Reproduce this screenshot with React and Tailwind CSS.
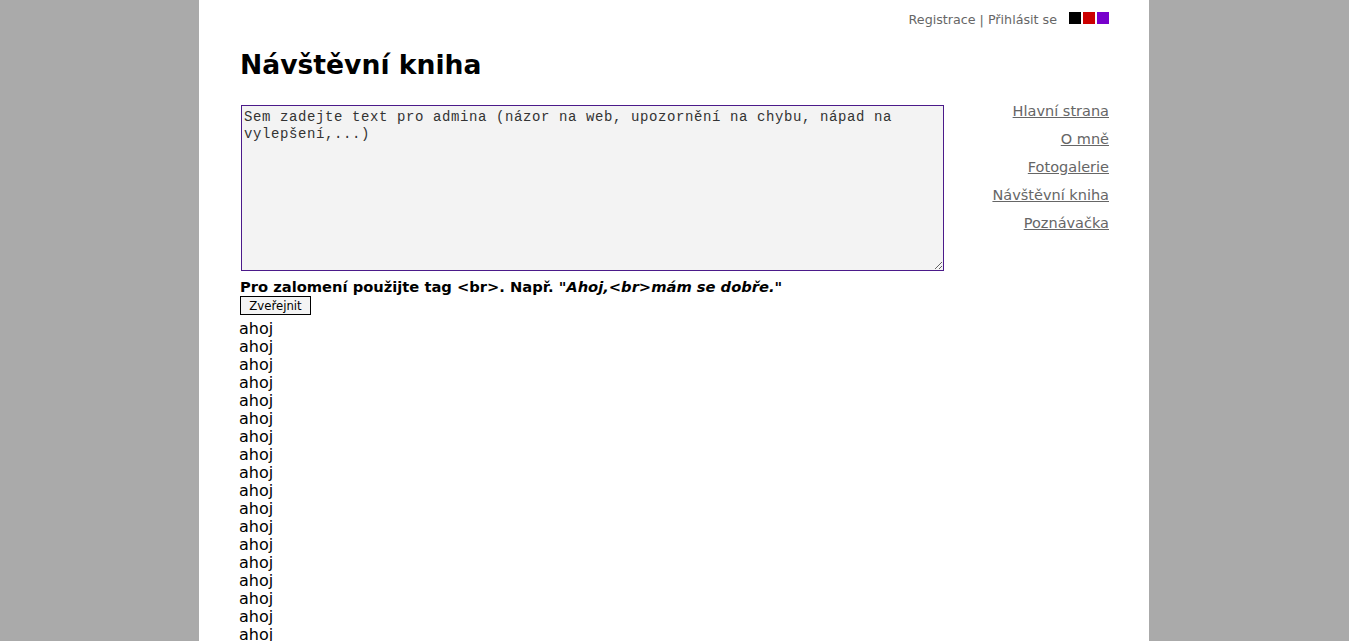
import React from "react";

const navLinks = ["Hlavní strana", "O mně", "Fotogalerie", "Návštěvní kniha", "Poznávačka"];

export default function App() {
  const lines = Array.from({ length: 20 });
  return (
    <div className="min-h-screen bg-[#aaaaaa] flex justify-center" style={{ fontFamily: "'DejaVu Sans', Verdana, sans-serif" }}>
      <div className="w-[950px] bg-white min-h-screen px-[40px] ml-[-1px]">
        <div className="flex justify-end items-center pt-[11px] h-[24px]">
          <span className="text-[12.7px] text-[#666666] leading-[16px] mr-[12px] mt-[4px]">
            <a className="text-[#666666]">Registrace</a> | <a className="text-[#666666]">Přihlásit se</a>
          </span>
          <span className="w-[12px] h-[12px] bg-black" />
          <span className="w-[12px] h-[12px] bg-[#cc0000] ml-[2px]" />
          <span className="w-[12px] h-[12px] bg-[#7700cc] ml-[2px]" />
        </div>
        <h1 className="text-[26.6px] font-bold leading-[34px] mt-[24px] ml-[1px] text-black">Návštěvní kniha</h1>
        <div className="flex mt-[23px]">
          <div className="flex-1">
            <textarea
              className="block w-[703px] h-[166px] ml-[2px] border border-[#4b1a8a] bg-[#f3f3f3] text-[14px] leading-[17px] tracking-[0.6px] px-[2px] pt-[3px] text-[#333] outline-none resize-y"
              style={{ fontFamily: "'Liberation Mono', 'Courier New', monospace" }}
              defaultValue="Sem zadejte text pro admina (názor na web, upozornění na chybu, nápad na vylepšení,...)"
            />
            <div className="text-[14.7px] font-bold leading-[19px] mt-[6px] ml-[1px] text-black">
              Pro zalomení použijte tag &lt;br&gt;. Např. <i>"Ahoj,&lt;br&gt;mám se dobře."</i>
            </div>
            <button
              className="block mt-[0px] ml-[1px] border border-black bg-[#f4f4f4] text-[13px] leading-[17px] px-[6px] h-[19px] w-[71px] text-black"
              style={{ fontFamily: "'DejaVu Sans Condensed', 'Liberation Sans', sans-serif" }}
            >
              Zveřejnit
            </button>
            <div className="mt-[5px] text-[16px] leading-[18px] text-black">
              {lines.map((_, i) => (
                <div key={i}>ahoj</div>
              ))}
            </div>
          </div>
          <nav className="w-[160px] flex flex-col items-end mt-[-3px]">
            {navLinks.map((l) => (
              <a key={l} className="text-[14.5px] leading-[18px] text-[#666666] underline mb-[10px]">{l}</a>
            ))}
          </nav>
        </div>
      </div>
    </div>
  );
}
